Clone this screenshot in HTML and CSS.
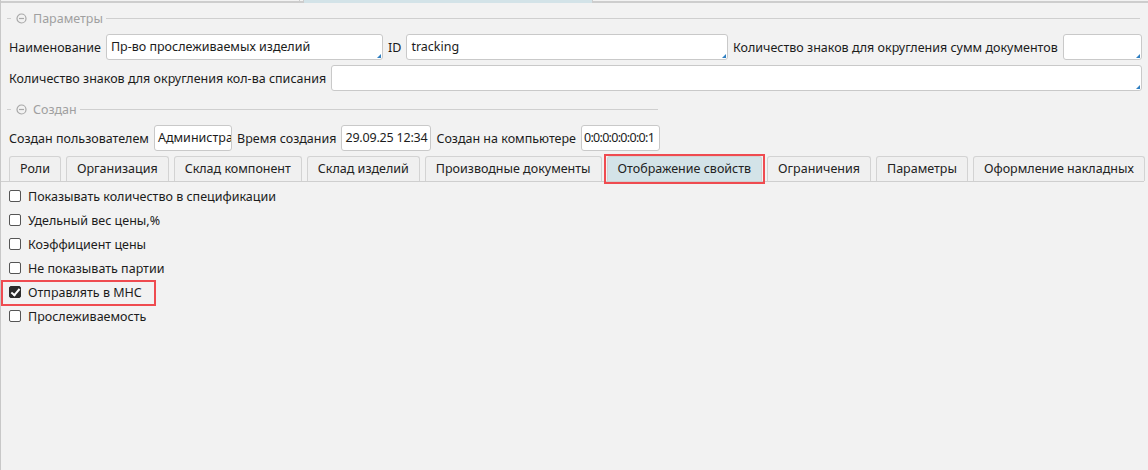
FILE: index.html
```html
<!DOCTYPE html>
<html lang="ru">
<head>
  <meta charset="UTF-8">
  <title>Пр-во прослеживаемых изделий</title>
  <link rel="stylesheet" href="styles.css">
</head>
<body>

<div class="top-edge"><span class="top-tick"></span><span class="top-tab"></span></div>

<div class="group">
  <div class="legend">
    <span class="legend-dash"></span>
    <svg class="legend-icon" width="11" height="11" viewBox="0 0 11 11"><circle cx="5.5" cy="5.5" r="4.5" fill="none" stroke="#a8a8a8" stroke-width="1.2"/><line x1="3" y1="5.5" x2="8" y2="5.5" stroke="#a8a8a8" stroke-width="1.2"/></svg>
    <span class="legend-text">Параметры</span>
    <span class="legend-line"></span>
  </div>

  <div class="row">
    <span class="label">Наименование</span>
    <div class="field w-name corner">Пр-во прослеживаемых изделий</div>
    <span class="label">ID</span>
    <div class="field w-id corner">tracking</div>
    <span class="label">Количество знаков для округления сумм документов</span>
    <div class="field w-small corner"></div>
  </div>

  <div class="row">
    <span class="label">Количество знаков для округления кол-ва списания</span>
    <div class="field grow corner"></div>
  </div>
</div>

<div class="group group-narrow">
  <div class="legend">
    <span class="legend-dash"></span>
    <svg class="legend-icon" width="11" height="11" viewBox="0 0 11 11"><circle cx="5.5" cy="5.5" r="4.5" fill="none" stroke="#a8a8a8" stroke-width="1.2"/><line x1="3" y1="5.5" x2="8" y2="5.5" stroke="#a8a8a8" stroke-width="1.2"/></svg>
    <span class="legend-text">Создан</span>
    <span class="legend-line"></span>
  </div>

  <div class="row">
    <span class="label">Создан пользователем</span>
    <div class="field w-user">Администра</div>
    <span class="label">Время создания</span>
    <div class="field w-time">29.09.25 12:34</div>
    <span class="label">Создан на компьютере</span>
    <div class="field w-host">0:0:0:0:0:0:0:1</div>
  </div>
</div>

<div class="tabs">
  <div class="tab">Роли</div>
  <div class="tab">Организация</div>
  <div class="tab">Склад компонент</div>
  <div class="tab">Склад изделий</div>
  <div class="tab">Производные документы</div>
  <div class="tab selected marked">Отображение свойств</div>
  <div class="tab">Ограничения</div>
  <div class="tab">Параметры</div>
  <div class="tab">Оформление накладных</div>
</div>

<div class="options">
  <label class="option"><span class="check"></span>Показывать количество в спецификации</label>
  <label class="option"><span class="check"></span>Удельный вес цены,%</label>
  <label class="option"><span class="check"></span>Коэффициент цены</label>
  <label class="option"><span class="check"></span>Не показывать партии</label>
  <label class="option marked-row"><span class="check checked"></span>Отправлять в МНС</label>
  <label class="option"><span class="check"></span>Прослеживаемость</label>
</div>

</body>
</html>
```

FILE: styles.css
```css
* {
  box-sizing: border-box;
}

html, body {
  margin: 0;
  padding: 0;
  height: 100%;
}

body {
  background: #f2f2f2;
  border-left: 1px solid #c8c8c8;
  font-family: "Noto Sans", "Open Sans", sans-serif;
  font-size: 12.5px;
  color: #1c1c1c;
  overflow: hidden;
}

/* cut-off edge of the outer tab bar */
.top-edge {
  height: 3px;
  border-bottom: 2px solid #cdcdcd;
  position: relative;
}

.top-tick {
  position: absolute;
  left: 298px;
  top: 0;
  width: 1px;
  height: 2px;
  background: #cdcdcd;
}

.top-tab {
  position: absolute;
  left: 302px;
  top: 0;
  width: 290px;
  height: 3px;
  background: #d3e3e8;
  border-left: 1px solid #cdcdcd;
  border-right: 1px solid #cdcdcd;
}

.group {
  padding: 6px 6px 0 5px;
}

.group-narrow {
  width: 665px;
  padding-top: 9px;
}

.legend {
  display: flex;
  align-items: center;
  height: 18px;
  color: #a0a0a0;
}

.legend-dash {
  width: 4px;
  height: 1px;
  background: #cfcfcf;
  margin-left: 1px;
}

.legend-icon {
  margin: 0 6px 0 5px;
}

.legend-text {
  margin-right: 3px;
}

.legend-line {
  flex: 1;
  height: 1px;
  background: #cfcfcf;
  margin-right: 2px;
}

.row {
  display: flex;
  align-items: center;
  gap: 5px;
  margin-top: 7px;
  padding-left: 3px;
}

.row + .row {
  margin-top: 5px;
}

.label {
  white-space: nowrap;
}

.field {
  height: 26px;
  line-height: 24px;
  background: #fff;
  border: 1px solid #c9c9c9;
  border-radius: 3px;
  padding: 0 4px;
  white-space: nowrap;
  overflow: hidden;
  position: relative;
}

.corner::after {
  content: "";
  position: absolute;
  right: 1px;
  bottom: 1px;
  border-style: solid;
  border-width: 0 0 4px 4px;
  border-color: transparent transparent #2f7fc1 transparent;
}

.w-name { width: 280px; }
.w-id { width: 325px; }
.w-small { width: 80px; }
.w-user { width: 79px; padding: 0 3px; }
.w-time { width: 91px; padding: 0 3px; letter-spacing: -0.2px; }
.w-host { width: 80px; padding: 0 2px; letter-spacing: -0.7px; }
.grow { flex: 1; }

.tabs {
  display: flex;
  gap: 5px;
  margin-top: 5px;
  padding: 0 5px 0 8px;
  border-bottom: 1px solid #cfcfcf;
  width: 1143px;
}

.tab {
  height: 25px;
  line-height: 24px;
  padding: 0 10px;
  border: 1px solid #d3d3d3;
  border-bottom: none;
  border-radius: 3px 3px 0 0;
  background: #f0f0f0;
  white-space: nowrap;
  color: #222;
}

.tab:last-child {
  flex: 1;
  text-align: center;
}

.tab.selected {
  background: #d3e3e8;
}

.marked {
  position: relative;
}

.marked::after {
  content: "";
  position: absolute;
  left: -4px;
  right: -4px;
  top: -3px;
  bottom: -3px;
  border: 2px solid #ef4b50;
}

.options {
  display: flex;
  flex-direction: column;
  gap: 4px;
  padding: 4px 0 0 8px;
}

.option {
  display: flex;
  align-items: center;
  height: 20px;
  gap: 7px;
  position: relative;
  width: max-content;
}

.check {
  width: 12px;
  height: 12px;
  border: 1px solid #555;
  border-radius: 2px;
  background: #fff;
  position: relative;
}

.check.checked {
  background: #2b2b2b;
  border-color: #2b2b2b;
}

.check.checked::after {
  content: "";
  position: absolute;
  left: 3px;
  top: 0px;
  width: 3px;
  height: 7px;
  border: solid #fff;
  border-width: 0 2px 2px 0;
  transform: rotate(40deg);
}

.marked-row::after {
  content: "";
  position: absolute;
  left: -8px;
  right: -14px;
  top: -2px;
  bottom: -4px;
  border: 2px solid #ef4b50;
}
```
